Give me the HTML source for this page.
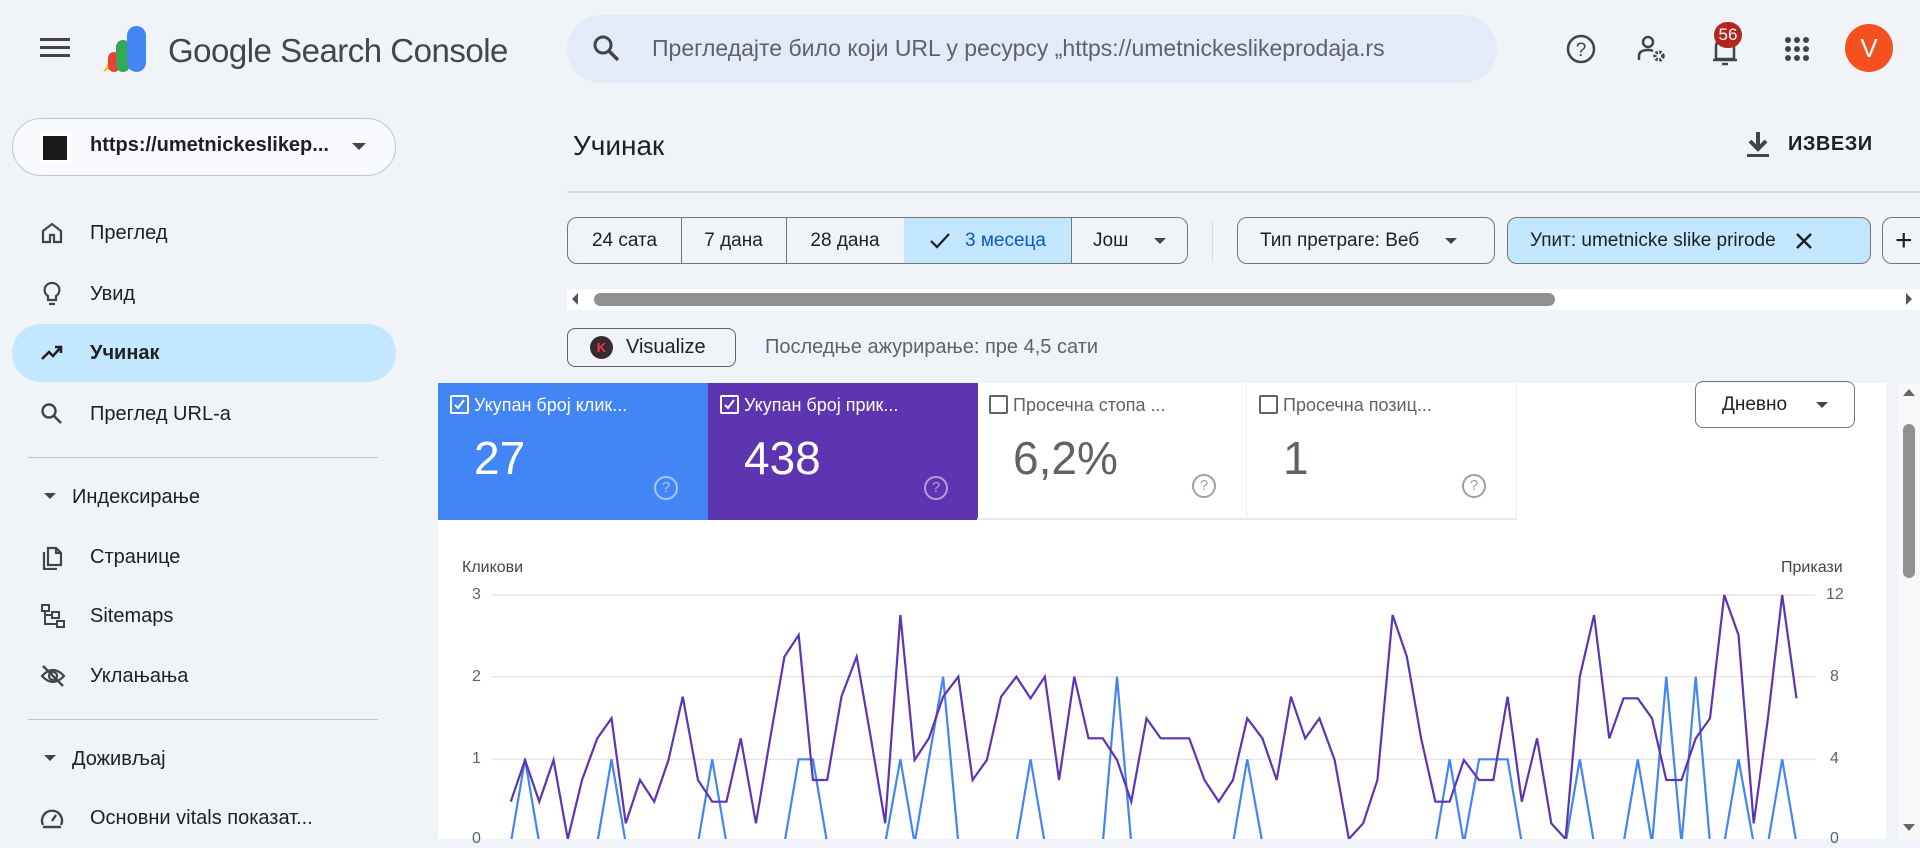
<!DOCTYPE html>
<html><head><meta charset="utf-8"><style>
*{box-sizing:border-box;margin:0;padding:0}
body{width:1920px;height:839px;overflow:hidden;background:#f0f4f9;font-family:"Liberation Sans",Arial,sans-serif;color:#1f1f1f;position:relative}
.a{position:absolute}
.nav{position:absolute;left:12px;width:384px;height:58px;display:flex;align-items:center;font-size:20px;color:#1f1f1f}
.nav svg{position:absolute;left:28px}
.nav span{position:absolute;left:78px}
.chip{position:absolute;top:217px;height:47px;border:1px solid #747775;display:flex;align-items:center;justify-content:center;font-size:19px;color:#1f1f1f}
.card{position:absolute;top:383px;height:137px;width:270px}
.card .l{position:absolute;left:36px;top:12px;font-size:18px;white-space:nowrap}
.card .n{position:absolute;left:36px;top:48px;font-size:46px}
.card .cb{position:absolute;left:12px;top:12px;width:19px;height:19px;border:2px solid;border-radius:2px}
.card .h{position:absolute;right:30px;bottom:20px;width:24px;height:24px;border:2px solid;border-radius:50%;font-size:15px;text-align:center;line-height:20px}
</style></head><body>
<!-- header -->
<svg class="a" style="left:40px;top:36px" width="30" height="24"><rect y="2" width="30" height="3" fill="#444"/><rect y="10" width="30" height="3" fill="#444"/><rect y="18" width="30" height="3" fill="#444"/></svg>
<svg class="a" style="left:100px;top:26px" width="52" height="50">
<path d="M3 46 L8 38 A7 7 0 1 1 12 42 Z" fill="#fbbc04"/>
<rect x="8" y="26" width="12" height="20" rx="6" fill="#ea4335"/>
<rect x="16" y="14" width="14" height="32" rx="7" fill="#34a853"/>
<rect x="27" y="0" width="19" height="46" rx="9.5" fill="#4285f4"/>
</svg>
<div class="a" style="left:168px;top:32px;font-size:33px;color:#444746;letter-spacing:-0.5px">Google Search Console</div>
<div class="a" style="left:567px;top:15px;width:930px;height:68px;border-radius:34px;background:#e3ebf8"></div>
<svg class="a" style="left:591px;top:33px" width="30" height="30"><circle cx="12" cy="12" r="8" fill="none" stroke="#444" stroke-width="3"/><path d="M18 18 L27 27" stroke="#444" stroke-width="3.5"/></svg>
<div class="a" style="left:652px;top:35px;font-size:23px;color:#5f6368;width:772px;overflow:hidden;white-space:nowrap">Прегледајте било који URL у ресурсу „https://umetnickeslikeprodaja.rs</div>
<svg class="a" style="left:1565px;top:33px" width="32" height="32"><circle cx="16" cy="16" r="13" fill="none" stroke="#444" stroke-width="2.5"/><text x="16" y="23" font-size="19" text-anchor="middle" fill="#444" font-family="Liberation Sans">?</text></svg>
<svg class="a" style="left:1636px;top:33px" width="32" height="32"><circle cx="12" cy="9" r="5" fill="none" stroke="#444" stroke-width="2.5"/><path d="M3 27 V23 Q3 17 12 17 Q15 17 17 18" fill="none" stroke="#444" stroke-width="2.5"/><circle cx="23" cy="23" r="4" fill="none" stroke="#444" stroke-width="3.5" stroke-dasharray="2.2 1.6"/></svg>
<svg class="a" style="left:1710px;top:33px" width="30" height="34"><path d="M6 26 V14 Q6 6 15 6 Q24 6 24 14 V26 Z M3 27 H27 M12 31 H18" fill="none" stroke="#444" stroke-width="2.5"/></svg>
<div class="a" style="left:1714px;top:22px;width:28px;height:26px;border-radius:13px;background:#b3261e;color:#fff;font-size:17px;text-align:center;line-height:26px">56</div>
<svg class="a" style="left:1784px;top:36px" width="26" height="26"><g fill="#444"><circle cx="4" cy="4" r="3"/><circle cx="13" cy="4" r="3"/><circle cx="22" cy="4" r="3"/><circle cx="4" cy="13" r="3"/><circle cx="13" cy="13" r="3"/><circle cx="22" cy="13" r="3"/><circle cx="4" cy="22" r="3"/><circle cx="13" cy="22" r="3"/><circle cx="22" cy="22" r="3"/></g></svg>
<div class="a" style="left:1845px;top:24px;width:48px;height:48px;border-radius:50%;background:#f4511e;color:#fff;font-size:26px;text-align:center;line-height:48px">V</div>

<!-- sidebar -->
<div class="a" style="left:12px;top:118px;width:384px;height:58px;border:1px solid #c4c7c5;border-radius:29px;background:#f8fafd"></div>
<div class="a" style="left:40px;top:133px;width:30px;height:30px;background:#fff;padding:3px"><div style="width:24px;height:24px;background:#1a1a1a"></div></div>
<div class="a" style="left:90px;top:134px;font-size:20px;font-weight:bold;color:#1f1f1f">https://umetnickeslikep...</div>
<div class="a" style="left:352px;top:143px;border-left:7px solid transparent;border-right:7px solid transparent;border-top:7px solid #444"></div>

<div class="nav" style="top:204px"><svg width="24" height="24"><path d="M3 10 L12 3 L21 10 V21 H14 V14 H10 V21 H3 Z" fill="none" stroke="#444" stroke-width="2.2"/></svg><span>Преглед</span></div>
<div class="nav" style="top:265px"><svg width="24" height="26"><path d="M12 2 A7 7 0 0 0 8 15 V19 H16 V15 A7 7 0 0 0 12 2 Z M9 23 H15" fill="none" stroke="#444" stroke-width="2.2"/></svg><span>Увид</span></div>
<div class="nav" style="top:324px;background:#c2e7ff;border-radius:29px"><svg width="24" height="24"><path d="M2 18 L9 11 L13 15 L21 6 M15 6 H21 V12" fill="none" stroke="#1f1f1f" stroke-width="2.5"/></svg><span style="font-weight:bold">Учинак</span></div>
<div class="nav" style="top:385px"><svg width="24" height="24"><circle cx="9" cy="9" r="6.5" fill="none" stroke="#444" stroke-width="2.4"/><path d="M14 14 L21 21" stroke="#444" stroke-width="2.6"/></svg><span>Преглед URL-а</span></div>
<div class="a" style="left:28px;top:457px;width:350px;height:1px;background:#c4c7c5"></div>
<div class="nav" style="top:468px"><div class="a" style="left:32px;top:25px;border-left:6px solid transparent;border-right:6px solid transparent;border-top:6px solid #444"></div><span style="left:60px">Индексирање</span></div>
<div class="nav" style="top:528px"><svg width="24" height="26"><path d="M8 4 H16 L21 9 V21 H8 Z M16 4 V9 H21 M4 8 V25 H17" fill="none" stroke="#444" stroke-width="2.2"/></svg><span>Странице</span></div>
<div class="nav" style="top:587px"><svg width="26" height="26"><g fill="none" stroke="#444" stroke-width="2"><rect x="2" y="2" width="7" height="6"/><rect x="12" y="9" width="7" height="6"/><rect x="17" y="18" width="7" height="6"/><path d="M5 8 V21 H17 M5 12 H12"/></g></svg><span>Sitemaps</span></div>
<div class="nav" style="top:647px"><svg width="26" height="24"><path d="M2 12 Q13 0 24 12 Q13 24 2 12 Z" fill="none" stroke="#444" stroke-width="2.2"/><circle cx="13" cy="12" r="4" fill="none" stroke="#444" stroke-width="2.2"/><path d="M3 2 L23 22" stroke="#444" stroke-width="2.4"/></svg><span>Уклањања</span></div>
<div class="a" style="left:28px;top:719px;width:350px;height:1px;background:#c4c7c5"></div>
<div class="nav" style="top:730px"><div class="a" style="left:32px;top:25px;border-left:6px solid transparent;border-right:6px solid transparent;border-top:6px solid #444"></div><span style="left:60px">Доживљај</span></div>
<div class="nav" style="top:789px"><svg width="24" height="24"><path d="M3 19 A10 10 0 1 1 21 19" fill="none" stroke="#444" stroke-width="2.4"/><path d="M12 15 L16 9" stroke="#444" stroke-width="2.4"/><path d="M3 21 H21" stroke="#444" stroke-width="2.4"/></svg><span>Основни vitals показат...</span></div>

<!-- main top -->
<div class="a" style="left:573px;top:130px;font-size:28px;color:#1f1f1f">Учинак</div>
<svg class="a" style="left:1744px;top:130px" width="28" height="30"><path d="M14 2 V18 M6 11 L14 19 L22 11" fill="none" stroke="#444" stroke-width="4"/><rect x="3" y="24" width="22" height="3" fill="#444"/></svg>
<div class="a" style="left:1788px;top:133px;font-size:20px;font-weight:bold;color:#1f1f1f;letter-spacing:0.5px">ИЗВЕЗИ</div>
<div class="a" style="left:567px;top:191px;width:1353px;height:2px;background:#dadce0"></div>

<div class="chip" style="left:567px;width:115px;border-radius:10px 0 0 10px">24 сата</div>
<div class="chip" style="left:681px;width:106px;border-left:none">7 дана</div>
<div class="chip" style="left:786px;width:119px;border-left:none">28 дана</div>
<div class="chip" style="left:904px;width:168px;border-left:none;background:#c2e7ff;color:#0b57d0">
<svg width="22" height="20" style="margin-right:14px"><path d="M2 10 L8 16 L20 3" fill="none" stroke="#1f1f1f" stroke-width="2.2"/></svg>3 месеца</div>
<div class="chip" style="left:1071px;width:117px;border-left:none;border-radius:0 10px 10px 0;justify-content:flex-start;padding-left:22px">Још<div style="margin-left:26px;border-left:6px solid transparent;border-right:6px solid transparent;border-top:6px solid #444"></div></div>
<div class="a" style="left:1212px;top:220px;width:1px;height:42px;background:#dadce0"></div>
<div class="chip" style="left:1237px;width:258px;border-radius:10px;justify-content:flex-start;padding-left:22px">Тип претраге: Веб<div style="margin-left:26px;border-left:6px solid transparent;border-right:6px solid transparent;border-top:6px solid #444"></div></div>
<div class="chip" style="left:1507px;width:364px;border-radius:10px;background:#c2e7ff;justify-content:flex-start;padding-left:22px">Упит: umetnicke slike prirode<svg width="20" height="20" style="margin-left:18px"><path d="M3 3 L17 17 M17 3 L3 17" stroke="#1f1f1f" stroke-width="2.4"/></svg></div>
<div class="chip" style="left:1882px;width:60px;border-radius:10px;justify-content:flex-start;padding-left:12px;font-size:30px">+</div>

<div class="a" style="left:567px;top:289px;width:1353px;height:21px;background:#fff"></div>
<div class="a" style="left:572px;top:293px;border-top:6px solid transparent;border-bottom:6px solid transparent;border-right:6px solid #555"></div>
<div class="a" style="left:594px;top:293px;width:961px;height:13px;border-radius:7px;background:#909090"></div>
<div class="a" style="left:1906px;top:293px;border-top:6px solid transparent;border-bottom:6px solid transparent;border-left:6px solid #555"></div>

<div class="a" style="left:567px;top:328px;width:169px;height:39px;border:1.5px solid #5f6368;border-radius:8px"></div>
<div class="a" style="left:590px;top:336px;width:23px;height:23px;border-radius:50%;background:#3a2a2e"><div style="color:#e63950;font-size:13px;font-weight:bold;text-align:center;line-height:23px">K</div></div>
<div class="a" style="left:626px;top:336px;font-size:20px;color:#1f1f1f">Visualize</div>
<div class="a" style="left:765px;top:336px;font-size:20px;color:#5f6368">Последње ажурирање: пре 4,5 сати</div>

<!-- chart panel -->
<div class="a" style="left:438px;top:383px;width:1448px;height:456px;background:#fff"></div>
<div class="card" style="left:438px;background:#4285f4;color:#fff"><div class="cb" style="border-color:#fff"><svg width="15" height="15" style="position:absolute;left:0;top:0"><path d="M3 8 L6 11 L12 3" fill="none" stroke="#fff" stroke-width="2"/></svg></div><div class="l">Укупан број клик...</div><div class="n">27</div><div class="h" style="border-color:#a8c7fa;color:#a8c7fa">?</div></div>
<div class="card" style="left:708px;background:#5e35b1;color:#fff"><div class="cb" style="border-color:#fff"><svg width="15" height="15" style="position:absolute;left:0;top:0"><path d="M3 8 L6 11 L12 3" fill="none" stroke="#fff" stroke-width="2"/></svg></div><div class="l">Укупан број прик...</div><div class="n">438</div><div class="h" style="border-color:#b39ddb;color:#b39ddb">?</div></div>
<div class="card" style="left:977px;color:#5f6368;border-right:1px solid #eee;border-bottom:2px solid #e8e8e8"><div class="cb" style="border-color:#5f6368"></div><div class="l">Просечна стопа ...</div><div class="n">6,2%</div><div class="h" style="border-color:#9aa0a6;color:#9aa0a6">?</div></div>
<div class="card" style="left:1247px;color:#5f6368;border-right:1px solid #eee;border-bottom:2px solid #e8e8e8"><div class="cb" style="border-color:#5f6368"></div><div class="l">Просечна позиц...</div><div class="n">1</div><div class="h" style="border-color:#9aa0a6;color:#9aa0a6">?</div></div>
<div class="a" style="left:1695px;top:381px;width:160px;height:47px;border:1px solid #747775;border-radius:8px;font-size:19px;padding:12px 0 0 26px">Дневно<div style="position:absolute;right:26px;top:20px;border-left:6px solid transparent;border-right:6px solid transparent;border-top:6px solid #444"></div></div>

<div class="a" style="left:1898px;top:383px;width:22px;height:456px;background:#f8f8f8"></div>
<div class="a" style="left:1903px;top:389px;border-left:6px solid transparent;border-right:6px solid transparent;border-bottom:7px solid #666"></div>
<div class="a" style="left:1903px;top:424px;width:12px;height:154px;border-radius:6px;background:#909090"></div>
<div class="a" style="left:1903px;top:824px;border-left:6px solid transparent;border-right:6px solid transparent;border-top:7px solid #666"></div>

<div class="a" style="left:462px;top:559px;font-size:16px;color:#444">Кликови</div>
<div class="a" style="left:1781px;top:559px;font-size:16px;color:#444">Прикази</div>
<div class="a" style="left:472px;top:586px;font-size:16px;color:#5f6368">3</div>
<div class="a" style="left:472px;top:668px;font-size:16px;color:#5f6368">2</div>
<div class="a" style="left:472px;top:750px;font-size:16px;color:#5f6368">1</div>
<div class="a" style="left:472px;top:830px;font-size:16px;color:#5f6368">0</div>
<div class="a" style="left:1826px;top:586px;font-size:16px;color:#5f6368">12</div>
<div class="a" style="left:1830px;top:668px;font-size:16px;color:#5f6368">8</div>
<div class="a" style="left:1830px;top:750px;font-size:16px;color:#5f6368">4</div>
<div class="a" style="left:1830px;top:830px;font-size:16px;color:#5f6368">0</div>

<svg class="a" style="left:430px;top:380px" width="1490" height="459" viewBox="0 0 1568 1377" preserveAspectRatio="none">
<g stroke="#e6e6e6" stroke-width="1.5" vector-effect="non-scaling-stroke">
<path d="M65 645 H1458 M65 890 H1458 M65 1138 H1458" vector-effect="non-scaling-stroke"/></g>
<polyline fill="none" stroke="#4285f4" stroke-width="2.2" vector-effect="non-scaling-stroke" points="85,1390 100,1138 115,1390 176,1390 191,1138 206,1390 282,1390 297,1138 312,1390 373,1390 388,1138 403,1138 418,1390 479,1390 495,1138 510,1390 525,1138 540,890 556,1390 617,1390 632,1138 647,1390 708,1390 723,890 738,1390 845,1390 860,1138 876,1390 1058,1390 1073,1138 1088,1390 1104,1138 1119,1138 1134,1138 1149,1390 1195,1390 1210,1138 1225,1390 1256,1390 1271,1138 1286,1390 1301,890 1317,1390 1332,890 1347,1390 1362,1390 1377,1138 1393,1390 1408,1390 1423,1138 1438,1390"/>
<polyline fill="none" stroke="#5e35b1" stroke-width="2.2" vector-effect="non-scaling-stroke" points="85,1265 100,1140 115,1265 130,1140 145,1377 160,1200 176,1075 191,1015 206,1330 221,1200 236,1265 251,1140 266,950 282,1200 297,1265 312,1265 327,1075 343,1330 358,1075 373,830 388,765 403,1200 418,1200 433,950 449,830 464,1075 479,1330 495,705 510,1140 525,1075 540,950 556,890 571,1200 586,1140 601,950 617,890 632,955 647,890 662,1200 678,890 693,1075 708,1075 723,1140 738,1265 754,1015 769,1075 784,1075 799,1075 815,1200 830,1265 845,1200 860,1015 876,1075 891,1200 906,950 921,1075 936,1015 952,1140 967,1377 982,1330 997,1200 1013,705 1028,830 1043,1075 1058,1265 1073,1265 1088,1140 1104,1200 1119,1200 1134,950 1149,1265 1165,1075 1180,1330 1195,1377 1210,890 1225,705 1241,1075 1256,955 1271,955 1286,1015 1301,1200 1317,1200 1332,1075 1347,1015 1362,645 1377,765 1393,1330 1408,1015 1423,645 1438,955"/>
</svg>
</body></html>
